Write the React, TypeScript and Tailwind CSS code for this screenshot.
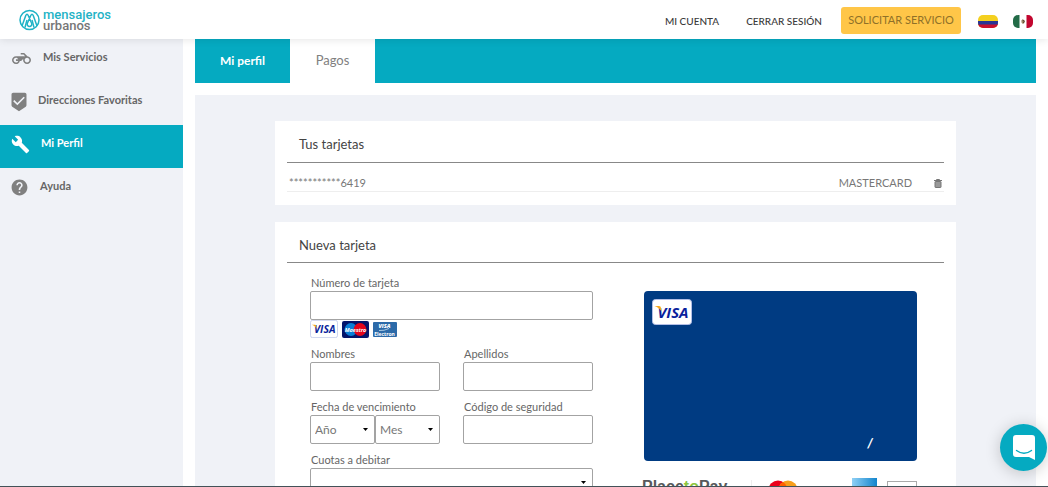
import { useState } from 'react'
import { MdBeenhere, MdBuild, MdHelp } from 'react-icons/md'

function Moto() {
  return (
    <svg className="w-[19px] h-[19px]" viewBox="0 0 24 24" fill="currentColor">
      <path d="M19.44 9.03L15.41 5H11v2h3.59l2 2H5c-2.8 0-5 2.2-5 5s2.2 5 5 5c2.46 0 4.45-1.69 4.9-4h1.65l2.77-2.77c-.21.54-.32 1.14-.32 1.77 0 2.8 2.2 5 5 5s5-2.2 5-5c0-2.65-1.97-4.77-4.56-4.97zM7.82 15C7.4 16.15 6.28 17 5 17c-1.63 0-3-1.37-3-3s1.37-3 3-3c1.28 0 2.4.85 2.82 2H5v2h2.82zM19 17c-1.66 0-3-1.34-3-3s1.34-3 3-3 3 1.34 3 3-1.34 3-3 3z" />
    </svg>
  )
}

const MENU = [
  { id: 'servicios', label: 'Mis Servicios', icon: <Moto /> },
  { id: 'direcciones', label: 'Direcciones Favoritas', icon: <MdBeenhere className="w-5 h-5 -ml-[3px] -mr-[3px]" /> },
  { id: 'perfil', label: 'Mi Perfil', icon: <MdBuild className="w-[19px] h-[19px] -ml-px -mr-px" /> },
  { id: 'ayuda', label: 'Ayuda', icon: <MdHelp className="w-[19px] h-[19px] -ml-0.5 -mr-px" /> },
]

const CAMPO = 'block w-full h-[29px] px-1 bg-white border border-[#a3a3a3] rounded-[2px] outline-none focus:border-[#05aac1]'
const ETIQUETA = 'block pl-px text-[11px] leading-4 text-[#666]'

function Logo() {
  return (
    <a href="#inicio" className="flex items-center gap-[3px] pt-px">
      <svg className="w-[21px] h-[22px]" viewBox="0 0 42 44" fill="none" stroke="#1fb3c6" strokeWidth="3">
        <circle cx="21" cy="22" r="19" />
        <path d="M6 34 L13.5 13 Q16 8 18.5 13 L25 28 A4.6 4.6 0 1 1 17 28 L23.5 13 Q26 8 28.5 13 L36 34" />
        <path d="M12 37 L16 22 M30 37 L26 22" />
      </svg>
      <span className="flex flex-col font-['Roboto',sans-serif] text-[13px] font-medium leading-[11px]">
        <span className="text-[#1fb3c6]">mensajeros</span>
        <span className="text-[#777]">urbanos</span>
      </span>
    </a>
  )
}

function BanderaColombia() {
  return (
    <svg className="w-5 h-[13px] rounded-[5px]" viewBox="0 0 20 13">
      <rect width="20" height="13" fill="#f4d01f" />
      <rect y="6" width="20" height="4" fill="#283593" />
      <rect y="9.5" width="20" height="3.5" fill="#c8102e" />
    </svg>
  )
}

function BanderaMexico() {
  return (
    <svg className="w-5 h-[13px] rounded-[5px]" viewBox="0 0 20 13">
      <rect width="20" height="13" fill="#fff" />
      <rect width="6.5" height="13" fill="#226b47" />
      <rect x="13.5" width="6.5" height="13" fill="#c2062f" />
      <path d="M8.5 5.5 Q10 3.5 11.5 5.5 Q12.2 8.5 10 8.8 Q8 8.5 8.5 5.5" fill="#a08a68" />
      <path d="M9.5 5 L11.3 6 L10.3 8" stroke="#5c4630" strokeWidth="1" fill="none" />
    </svg>
  )
}

function Visa({ className }: { className: string }) {
  return (
    <svg className={className} viewBox="0 0 40 26" role="img" aria-label="Visa">
      <rect x="0.5" y="0.5" width="39" height="25" rx="3" fill="#fff" stroke="#b4bfe6" />
      <text x="21" y="18.5" textAnchor="middle" fontFamily="Open Sans, sans-serif" fontSize="15" fontWeight="700" fontStyle="italic" fill="#0a1f9c">VISA</text>
      <path d="M2.5 7 H7 Q8.8 7.2 9 9 L9.6 12.5 Q6.5 8 2.5 7Z" fill="#f7a81b" />
    </svg>
  )
}

function Maestro() {
  return (
    <svg className="w-[27px] h-[17px]" viewBox="0 0 27 17" role="img" aria-label="Maestro">
      <rect width="27" height="17" rx="2" fill="#04156b" />
      <circle cx="9" cy="8.5" r="6.4" fill="#0b7fd6" />
      <circle cx="18" cy="8.5" r="6.4" fill="#e3051b" />
      <text x="13.5" y="10.5" textAnchor="middle" fontFamily="Open Sans, sans-serif" fontSize="5.5" fontWeight="700" fontStyle="italic" fill="#fff">Maestro</text>
    </svg>
  )
}

function VisaElectron() {
  return (
    <svg className="w-6 h-[15px]" viewBox="0 0 24 15" role="img" aria-label="Visa Electron">
      <rect width="24" height="15" rx="1" fill="#2c6aa8" />
      <text x="11.5" y="6" textAnchor="middle" fontFamily="Open Sans, sans-serif" fontSize="5.5" fontWeight="800" fontStyle="italic" fill="#fff">VISA</text>
      <path d="M6 8.5 Q11 9 16 6.5" stroke="#a9c8e2" fill="none" />
      <text x="11.5" y="13.5" textAnchor="middle" fontFamily="Open Sans, sans-serif" fontSize="5" fontWeight="700" fill="#fff">Electron</text>
    </svg>
  )
}

function Selector({ id, label, opciones = [] }: { id: string; label?: string; opciones?: string[] }) {
  return (
    <div className="relative">
      <select id={id} aria-label={label} className={`${CAMPO} appearance-none text-[12px] text-[#777]`}>
        {opciones.map((o) => <option key={o}>{o}</option>)}
      </select>
      <svg className="absolute right-[7px] top-[13px] w-[5px] h-[3px] pointer-events-none" viewBox="0 0 5 3">
        <path d="M0 0 H5 L2.5 3Z" fill="#000" />
      </svg>
    </div>
  )
}

function Campo({ id, label }: { id: string; label: string }) {
  return (
    <div>
      <label htmlFor={id} className={ETIQUETA}>{label}</label>
      <input id={id} type="text" className={CAMPO} />
    </div>
  )
}

function Pasarela() {
  return (
    <div className="flex items-start -ml-0.5 mt-[17px]">
      <span className="pt-px font-['Liberation_Sans',sans-serif] font-bold text-[16px] leading-4 text-[#58595b]">
        Place<span className="text-[#8cc63f]">to</span>Pay
      </span>
      <svg className="ml-auto w-[166px] h-5" viewBox="0 0 166 20">
        <path d="M0.5 2 V20" stroke="#eee" />
        <circle cx="27" cy="12" r="9.5" fill="#eb001b" />
        <circle cx="37" cy="12" r="9.5" fill="#f79e1b" />
        <path d="M32 4 A9.5 9.5 0 0 1 32 20 A9.5 9.5 0 0 1 32 4" fill="#ff5f00" />
        <text x="54" y="18" fontFamily="Open Sans, sans-serif" fontSize="15" fontWeight="700" fontStyle="italic" fill="#c5e3ef">VISA</text>
        <defs>
          <linearGradient id="amex">
            <stop offset="0" stopColor="#8fd0f5" />
            <stop offset="1" stopColor="#1284cc" />
          </linearGradient>
        </defs>
        <rect x="101" width="25" height="20" fill="url(#amex)" />
        <rect x="136.5" y="3.5" width="29" height="18" fill="#fff" stroke="#aaa" />
      </svg>
    </div>
  )
}

export default function App() {
  const [activo, setActivo] = useState('perfil')
  const [tab, setTab] = useState('pagos')

  return (
    <div className="h-screen flex flex-col overflow-hidden bg-white font-['Lato',sans-serif]">
      <header className="relative z-10 shrink-0 h-[39px] flex items-center justify-between pl-[19px] pr-[15px] bg-white shadow-[0_1px_8px_rgba(0,0,0,0.1)]">
        <Logo />
        <nav className="flex items-center text-[10px] font-medium text-[#3a3a3a]">
          <a href="#cuenta" className="mr-[27px] mt-1">MI CUENTA</a>
          <a href="#salir" className="mr-[19px] mt-1">CERRAR SESIÓN</a>
          <button className="h-[27px] w-[120px] mt-0.5 mr-[17px] rounded-[3px] bg-[#ffc648] text-[11px] font-normal text-[#8f7128]">SOLICITAR SERVICIO</button>
          <button aria-label="Colombia" className="mt-1 mr-[15px]"><BanderaColombia /></button>
          <button aria-label="México" className="mt-1"><BanderaMexico /></button>
        </nav>
      </header>

      <div className="flex-1 min-h-0 flex overflow-hidden">
        <aside className="w-[183px] shrink-0 bg-[#f0f2f7]">
          {MENU.map((item) => (
            <button
              key={item.id}
              onClick={() => setActivo(item.id)}
              className={`w-full h-[43px] pl-3 flex items-center gap-3 text-[11px] font-bold ${activo === item.id ? 'bg-[#05aac1] text-white' : 'text-[#666]'}`}
            >
              <span className={activo === item.id ? 'pb-1 text-white' : 'pb-1 text-[#808080]'}>{item.icon}</span>
              <span className="pb-1.5">{item.label}</span>
            </button>
          ))}
        </aside>

        <main className="flex-1 min-w-0 mx-3">
          <div className="h-11 flex bg-[#05aac1] text-[13px]" role="tablist">
            <button
              role="tab"
              onClick={() => setTab('perfil')}
              className={`w-[95px] ${tab === 'perfil' ? 'bg-white text-[#808080]' : 'text-[12px] font-bold text-white'}`}
            >
              Mi perfil
            </button>
            <button
              role="tab"
              onClick={() => setTab('pagos')}
              className={`w-[85px] ${tab === 'pagos' ? 'bg-white text-[#808080]' : 'text-[12px] font-bold text-white'}`}
            >
              Pagos
            </button>
          </div>

          <div className="mt-3 px-20 pt-[26px] bg-[#f0f2f7]">
            <section className="bg-white px-3 pb-[13px]">
              <h2 className="h-[42px] pt-[13px] pl-3 border-b border-[#888] text-[13px] leading-5 text-[#444]">Tus tarjetas</h2>
              <table className="w-full mt-3 text-[11px] leading-4 text-[#777]">
                <tbody>
                  <tr className="border-b border-[#eee]">
                    <td className="pl-0.5">***********6419</td>
                    <td className="text-right pr-[22px]">MASTERCARD</td>
                    <td className="w-[10px]">
                      <button aria-label="Eliminar tarjeta" className="block">
                        <svg className="w-2 h-[9px]" viewBox="0 0 8 9">
                          <path d="M0 1.5 H8 M2.5 1 V0.5 H5.5 V1" stroke="#777" fill="none" />
                          <rect x="1" y="2.5" width="6" height="6" rx="0.5" fill="#999" stroke="#777" />
                        </svg>
                      </button>
                    </td>
                  </tr>
                </tbody>
              </table>
            </section>

            <section className="mt-[17px] bg-white px-3 pb-10">
              <h2 className="h-[41px] pt-[13px] pl-3 border-b border-[#888] text-[13px] leading-5 text-[#444]">Nueva tarjeta</h2>
              <div className="grid grid-cols-[1fr_273px] gap-[51px] pt-3 pl-[23px] pr-[27px]">
                <form className="flex flex-col gap-2">
                  <div>
                    <Campo id="numero" label="Número de tarjeta" />
                    <div className="flex items-center gap-1 h-[18px]">
                      <Visa className="w-7 h-[18px]" />
                      <Maestro />
                      <VisaElectron />
                    </div>
                  </div>
                  <div className="grid grid-cols-2 gap-[23px]">
                    <Campo id="nombres" label="Nombres" />
                    <Campo id="apellidos" label="Apellidos" />
                  </div>
                  <div className="grid grid-cols-2 gap-[23px]">
                    <fieldset>
                      <legend className={ETIQUETA}>Fecha de vencimiento</legend>
                      <div className="grid grid-cols-2">
                        <Selector id="anio" label="Año" opciones={['Año', '2020', '2021', '2022']} />
                        <Selector id="mes" label="Mes" opciones={['Mes', '01', '02', '03']} />
                      </div>
                    </fieldset>
                    <Campo id="codigo" label="Código de seguridad" />
                  </div>
                  <div>
                    <label htmlFor="cuotas" className={ETIQUETA}>Cuotas a debitar</label>
                    <Selector id="cuotas" />
                  </div>
                </form>

                <div className="pt-4">
                  <div className="h-[170px] p-2 flex flex-col justify-between rounded-[4px] bg-[#003b82]">
                    <Visa className="w-10 h-[26px]" />
                    <span className="self-end mr-9 text-[13px] leading-5 font-black italic text-white">/</span>
                  </div>
                  <Pasarela />
                </div>
              </div>
            </section>
          </div>
        </main>
      </div>

      <div className="shrink-0 h-px bg-[#435258]" />

      <button aria-label="Abrir chat" className="fixed right-px bottom-4 z-20 w-[47px] h-[47px] rounded-full flex items-center justify-center bg-[#05aac1] shadow-[0_2px_16px_rgba(0,0,0,0.2)]">
        <svg className="w-[22px] h-[25px]" viewBox="0 0 22 25">
          <path d="M3 0 H19 Q22 0 22 3 V25 L16 22 H3 Q0 22 0 19 V3 Q0 0 3 0Z" fill="#fff" />
          <path d="M3.5 15.5 Q11 21 18.5 15.5" stroke="#05aac1" strokeWidth="1.4" fill="none" strokeLinecap="round" />
        </svg>
      </button>
    </div>
  )
}
